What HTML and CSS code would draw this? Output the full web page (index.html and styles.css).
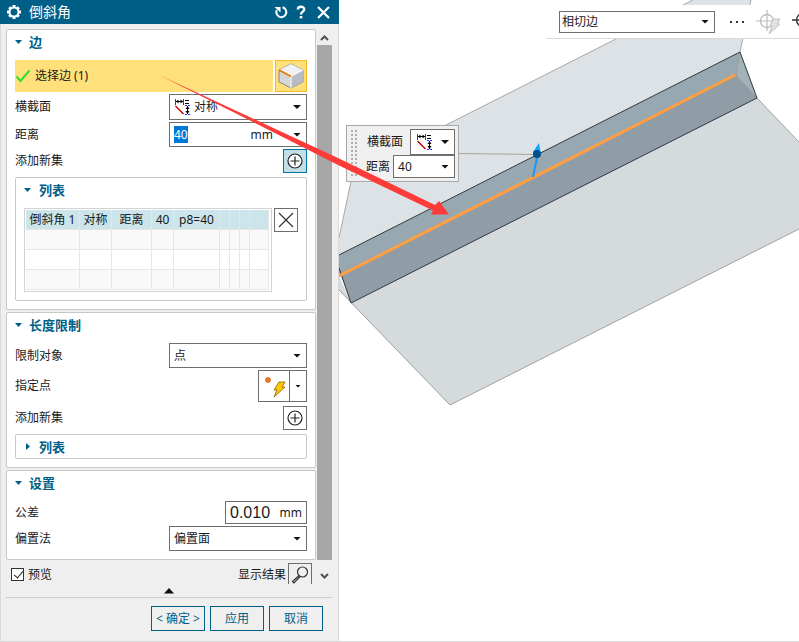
FILE: index.html
```html
<!DOCTYPE html>
<html lang="zh-CN">
<head>
<meta charset="utf-8">
<title>倒斜角</title>
<link rel="stylesheet" href="styles.css">
</head>
<body>
<svg class="defs" aria-hidden="true">
  <symbol id="i-sym" viewBox="0 0 18 18">
    <path d="M1.500 1v6M9.500 1v6M11 7.500h2M14 7.500h2M11 16.500h2M14 16.500h2" stroke="#2a2aff" fill="none"/>
    <path d="M2 3.500h7M13.500 8v8M11 2.500h4M11 5.500h4" stroke="#000" fill="none"/>
    <path d="M2 3.500l2.500-2v4zM9 3.500l-2.500-2v4zM13.500 8l2 3h-4zM13.500 16l2-3h-4z" fill="#000"/>
    <path d="M1.500 8l8 8" stroke="#c00000" stroke-width="1.400"/>
  </symbol>
  <symbol id="i-plus" viewBox="0 0 18 18">
    <circle cx="9" cy="9" r="7" fill="#fff" stroke="#222" stroke-width="1.200"/>
    <path d="M9 4.500v9M4.500 9h9" stroke="#222" stroke-width="1.200"/>
  </symbol>
</svg>
<div class="app">
  <aside class="panel">
    <header class="title">
      <svg width="16" height="16" viewBox="0 0 16 16">
        <path d="M8 1v14M1 8h14M3.200 3.200l9.600 9.600M12.800 3.200l-9.600 9.600" stroke="#fff" stroke-width="3"/>
        <circle cx="8" cy="8" r="4.500" fill="#005f87" stroke="#fff" stroke-width="2"/>
      </svg>
      <h1>倒斜角</h1>
      <button class="tb" aria-label="重置"><svg width="14" height="14" viewBox="0 0 14 14"><path d="M8.500 2.300A5 5 0 1 1 2.800 5" fill="none" stroke="#fff" stroke-width="2"/><path d="M0.500 2h6v5.500z" fill="#fff"/></svg></button>
      <button class="tb" aria-label="帮助"><svg width="14" height="14" viewBox="0 0 14 14"><path d="M3.800 4.500C3.800 0.800 10.300 0.900 10.300 4.300C10.300 6.600 7 6.600 7 9.400" fill="none" stroke="#fff" stroke-width="2.300"/><path d="M5.700 11h2.600v2.400H5.700z" fill="#fff"/></svg></button>
      <button class="tb" aria-label="关闭"><svg width="14" height="14" viewBox="0 0 14 14"><path d="M2 2l11 11M13 2L2 13" stroke="#fff" stroke-width="2.200"/></svg></button>
    </header>
    <div class="frame">
      <div class="scroll">
        <div class="cards">
          <section class="card">
            <h2 class="head">边</h2>
            <div class="pick">
              <div class="pick-label"><svg width="16" height="16" viewBox="0 0 16 16"><path d="M1.500 8.500l4 4.500L14.500 2.500" fill="none" stroke="#2fdc2f" stroke-width="2"/></svg>选择边 (1)</div>
              <button class="pick-btn" aria-label="选择边"><svg width="26" height="26" viewBox="0 0 26 26">
                <path d="M13 1l12 6v12l-12 6-12-6V7z" fill="#d4d6d8" stroke="#888" />
                <path d="M13 1l12 6-12 6.500L1 7z" fill="#f0f1f2"/>
                <path d="M13 13.500L25 7v12l-12 6z" fill="#b9bcc0"/>
                <path d="M13 13.500V25M13 13.500L25 7" stroke="#fff"/>
                <path d="M1 7l12 6.500" stroke="#f07800" stroke-width="1.800"/></svg></button>
            </div>
            <div class="row r26"><label for="sec">横截面</label>
              <span class="sel wide icon"><svg width="18" height="18"><use href="#i-sym"/></svg><select id="sec"><option>对称</option></select></span></div>
            <div class="row r25"><label for="dist">距离</label>
              <span class="sel wide field"><input id="dist" class="marked" value="40"><span class="unit">mm</span></span></div>
            <div class="row r24"><span>添加新集</span><button class="sq active" aria-label="添加新集"><svg width="18" height="18"><use href="#i-plus"/></svg></button></div>
            <div class="sub">
              <h3 class="head">列表</h3>
              <div class="list">
                <div class="table-box">
                  <table>
                    <colgroup><col class="c54"><col class="c32"><col class="c40"><col class="c22"><col class="c46"><col class="c10"><col class="c10"><col class="c10"><col></colgroup>
                    <tbody>
                      <tr class="on"><td>倒斜角 1</td><td>对称</td><td>距离</td><td>40</td><td>p8=40</td><td></td><td></td><td></td><td></td></tr>
                      <tr><td></td><td></td><td></td><td></td><td></td><td></td><td></td><td></td><td></td></tr>
                      <tr><td></td><td></td><td></td><td></td><td></td><td></td><td></td><td></td><td></td></tr>
                      <tr><td></td><td></td><td></td><td></td><td></td><td></td><td></td><td></td><td></td></tr>
                    </tbody>
                  </table>
                </div>
                <button class="sq" aria-label="移除"><svg width="18" height="18" viewBox="0 0 18 18"><path d="M2 2l14 14M16 2L2 16" stroke="#333" stroke-width="1.200"/></svg></button>
              </div>
            </div>
          </section>

          <section class="card">
            <h2 class="head">长度限制</h2>
            <div class="row r25"><label for="lim">限制对象</label><span class="sel wide"><select id="lim"><option>点</option></select></span></div>
            <div class="row r32"><span>指定点</span>
              <span class="split"><button class="point" aria-label="指定点"><svg width="28" height="28" viewBox="0 0 28 28"><circle cx="8" cy="8" r="2.500" fill="#f07820" stroke="#b85000" stroke-width=".6"/><path d="M19 10h6l-3 5h3L14 25l3-7h-3z" fill="#ffc800" stroke="#806000" stroke-width=".8"/></svg></button><button class="drop" aria-label="点类型"></button></span></div>
            <div class="row r24 spaced"><span>添加新集</span><button class="sq" aria-label="添加新集"><svg width="18" height="18"><use href="#i-plus"/></svg></button></div>
            <div class="sub closed"><h3 class="head">列表</h3></div>
          </section>

          <section class="card">
            <h2 class="head">设置</h2>
            <div class="row r23"><label for="tol">公差</label><span class="tol"><input id="tol" value="0.010"><span>mm</span></span></div>
            <div class="row r25"><label for="off">偏置法</label><span class="sel wide"><select id="off"><option>偏置面</option></select></span></div>
          </section>

          <div class="preview">
            <input type="checkbox" id="pv" checked><label for="pv">预览</label>
            <span class="result">显示结果</span>
            <button class="sq" aria-label="显示结果"><svg width="20" height="20" viewBox="0 0 20 20"><circle cx="12.500" cy="7" r="5" fill="none" stroke="#333" stroke-width="1.200"/><path d="M9 10.500l-6.500 6 1.500 1.500 6-6.500" fill="none" stroke="#333" stroke-width="1.200"/></svg></button>
          </div>
        </div>
        <div class="bar">
          <svg width="15" height="16" viewBox="0 0 15 16"><path d="M4 11l3.500-3.500L11 11" fill="none" stroke="#505050" stroke-width="2"/></svg>
          <div class="thumb"></div>
          <svg width="15" height="24" viewBox="0 0 15 24"><path d="M4 14l3.500 3.500L11 14" fill="none" stroke="#505050" stroke-width="2"/></svg>
        </div>
      </div>
      <div class="fold"><svg width="10" height="6" viewBox="0 0 10 6"><path d="M5 0l5 5.500H0z" fill="#111"/></svg></div>
      <footer class="actions">
        <button>&lt; 确定 &gt;</button><button>应用</button><button>取消</button>
      </footer>
    </div>
  </aside>

  <main class="view">
    <svg class="model" viewBox="339 0 460 641" preserveAspectRatio="xMinYMin slice">
      <path d="M339 238L353 172 446 125 693 0H751L740 52 339 255z" fill="#dde2e6"/>
      <path d="M339 238L353 172 446 125 693 0M751 0L740 52" fill="none" stroke="#a8a8a8"/>
      <path d="M339 276L351 303 339 290zM351 303L757 98 799 142V229L450 405z" fill="#d5dadd"/>
      <path d="M339 290L450 405 799 229M757 98L799 142" fill="none" stroke="#a0a2a3"/>
      <path d="M339 255L740 52 736 75 339 276z" fill="#98a8b0"/>
      <path d="M341 275L736 75 757 98 351 303z" fill="#909da6"/>
      <path d="M740 52L757 98 736 75z" fill="#a3b2b9"/>
      <path d="M740 52L736 75 757 98" fill="none" stroke="#9a9a9a"/>
      <path d="M339 255L740 52 757 98 351 303" fill="none" stroke="#30383c"/>
      <path d="M339 268L351 303" stroke="#30383c"/>
      <path d="M339 276L735 75" stroke="#ff9e42" stroke-width="3"/>
      <path d="M459 153.500L537 154.500" stroke="#aaa597"/>
      <path d="M538 153L533 177" stroke="#1696ff" stroke-width="2"/>
      <path d="M539 143L533 152 541 155z" fill="#0aa5ff"/>
      <circle cx="537" cy="154" r="4" fill="#00508c"/>
    </svg>
    <div class="toolbar">
      <span class="sel"><select aria-label="曲线规则"><option>相切边</option></select></span>
      <svg class="dots" width="14" height="4" viewBox="0 0 14 4"><path d="M0 1h2v2H0zM6 1h2v2H6zM12 1h2v2h-2z" fill="#333"/></svg>
      <svg width="26" height="26" viewBox="0 0 26 26"><circle cx="11" cy="12" r="6.500" fill="none" stroke="#bbb" stroke-width="1.300"/><path d="M11 1v21M0 12h21" stroke="#bbb" stroke-width="1.200"/><path d="M17 10h7l-3 5h3L13 25l3-8h-2z" fill="#e2e2e2" stroke="#c0c0c0"/></svg>
      <svg class="cut" width="22" height="22" viewBox="0 0 22 22"><circle cx="11" cy="9" r="6.500" fill="none" stroke="#333" stroke-width="1.400"/><path d="M11 0v20M0 9h22" stroke="#333" stroke-width="1.400"/></svg>
    </div>
    <div class="popup">
      <div class="grip"></div>
      <div class="popup-rows">
        <div class="prow"><span>横截面</span><button class="sel mini" aria-label="横截面"><svg width="18" height="18"><use href="#i-sym"/></svg></button></div>
        <div class="prow"><label for="pd">距离</label><span class="sel num"><input id="pd" value="40"></span></div>
      </div>
    </div>
  </main>
  <svg class="pointer" width="460" height="220" viewBox="0 0 460 220"><path d="M159 75L339 158.500 435 205 439 201 449 214.500H431L433 210.500 339 165.500 235 113z" fill="#fd3b38"/></svg>
</div>
</body>
</html>
```
FILE: styles.css
```css
* { box-sizing: border-box; }
body {
  margin: 0;
  color: #1a1a1a;
  background: #fff;
  font: 12px/16px "Noto Sans", "Noto Sans CJK SC", sans-serif;
}
button, input, select { margin: 0; padding: 0; border: 0; border-radius: 0; font: inherit; color: inherit; background: none; outline: 0; }
svg { display: block; flex: none; }
h1, h2, h3 { margin: 0; }
.defs { position: absolute; width: 0; height: 0; }
.app { position: relative; display: flex; min-height: 100vh; border-bottom: 1px solid #d9d9d9; overflow: hidden; }

/* dialog */
.panel { flex: none; width: 339px; display: flex; flex-direction: column; background: #efefef; }
.title { display: flex; align-items: center; height: 24px; padding: 0 9px 0 6px; color: #fff; background: #005f87; }
.title h1 { flex: 1; margin-left: 7px; font-size: 14px; font-weight: 400; line-height: 24px; }
.tb { width: 14px; height: 14px; }
.tb + .tb { margin-left: 6px; }
.tb:last-child { margin-left: 8px; }
.frame { flex: 1; padding: 5px 6px 0 5px; border: solid #d9d9d9; border-width: 0 1px; }
.scroll { display: flex; gap: 1px; }
.cards { flex: 1; display: flex; flex-direction: column; gap: 2px; min-width: 0; }
.card { display: flex; flex-direction: column; gap: 2px; padding: 0 8px 8px; border: 1px solid #c8c8c8; border-radius: 2px; background: #fff; }
.head { display: flex; align-items: center; gap: 7px; height: 24px; font-size: 13px; font-weight: 700; color: #005f87; }
.head::before { content: ""; width: 7px; height: 4px; background: #005f87; clip-path: polygon(0 0, 100% 0, 50% 100%); }
.card > .head { margin-bottom: 4px; }
.sub .head { gap: 8px; }
.pick { display: flex; gap: 2px; height: 32px; }
.pick-label { flex: 1; display: flex; align-items: center; gap: 4px; background: #ffe07a; }
.pick-btn { display: grid; place-items: center; width: 32px; background: #ffe07a; border: 1px solid #f5b820; }
.row { display: flex; align-items: center; justify-content: space-between; }
.r23 { height: 23px; }
.r24 { height: 24px; }
.r25 { height: 25px; }
.r26 { height: 26px; }
.r32 { height: 32px; }
.spaced { margin-top: 2px; }

.sel { position: relative; display: flex; align-items: center; height: 100%; padding: 0 4px; border: 1px solid #6e6e6e; background: #fff; }
.sel::after, .drop::after { content: ""; width: 8px; height: 4px; background: #111; clip-path: polygon(0 0, 100% 0, 50% 100%); }
.sel::after { position: absolute; right: 5px; top: 50%; margin-top: -2px; pointer-events: none; }
.sel select { appearance: none; width: 100%; height: 100%; }
.wide { width: 138px; }
.icon { gap: 2px; }
.field { justify-content: space-between; padding-right: 33px; }
.marked { width: 14px; height: 17px; color: #fff; background: #0078d7; }
.sq { display: grid; place-items: center; flex: none; width: 24px; height: 24px; border: 1px solid #6e6e6e; background: #fff; }
.sq.active { border-color: #00749e; background: #c2dfe6; }
.sub { margin-top: 2px; padding: 0 8px 8px; border: 1px solid #c8c8c8; border-radius: 2px; }
.sub .head { margin-bottom: 6px; }
.sub.closed { padding-bottom: 0; }
.closed .head { height: 23px; margin: 0; }
.closed .head::before { width: 4px; height: 7px; margin: 0 1px 0 2px; clip-path: polygon(0 0, 100% 50%, 0 100%); }
.list { display: flex; align-items: flex-start; gap: 2px; }
.table-box { flex: 1; padding: 1px; border: 1px solid #d2d2d2; }
table { width: 243px; table-layout: fixed; border-collapse: separate; border-spacing: 0; }
td { height: 20px; padding: 0; border: solid #e6e6e6; border-width: 0 1px 1px 0; text-align: center; white-space: nowrap; line-height: 19px; }
tr:nth-child(even) td { background: #f9f9f9; }
tr:last-child td { background: #f9f9f9; }
.on td { background: #cbe5ea; }
.c54 { width: 54px; }
.c32 { width: 32px; }
.c40 { width: 40px; }
.c22 { width: 22px; }
.c46 { width: 46px; }
.c10 { width: 10px; }

.split { display: flex; height: 100%; border: 1px solid #6e6e6e; }
.point { display: grid; place-items: center; width: 31px; border-right: 1px solid #6e6e6e; }
.drop { display: grid; place-items: center; width: 16px; }
.drop::after { width: 6px; height: 3px; }
.tol { display: flex; align-items: center; justify-content: space-between; width: 82px; height: 100%; padding: 0 4px; border: 1px solid #6e6e6e; }
.tol input { width: 48px; font: 16px "Liberation Sans", sans-serif; }
.preview { display: flex; align-items: flex-start; height: 22px; padding: 1px 4px 0 5px; line-height: 24px; overflow: hidden; }
.preview input { appearance: none; width: 13px; height: 13px; margin: 5px 4px 0 0; border: 1px solid #333; background: #fff; }
.preview input:checked::after { content: ""; display: block; width: 4px; height: 8px; margin: 0 0 0 4px; border: solid #222; border-width: 0 1px 1px 0; transform: rotate(40deg); }
.result { margin-left: auto; padding-right: 2px; }
.preview .sq { background: #efefef; }
.bar { display: flex; flex-direction: column; width: 15px; }
.thumb { flex: 1; background: #a6a6a6; }
.fold { display: flex; justify-content: center; height: 14px; padding-top: 4px; border-bottom: 1px solid #cfcfcf; }
.actions { display: flex; justify-content: flex-end; gap: 5px; padding: 8px 9px 10px 0; }
.actions button { width: 54px; height: 25px; border: 1px solid #005f87; color: #005f87; white-space: nowrap; }

/* graphics window */
.view { position: relative; flex: 1; min-width: 0; overflow: hidden; }
.model { position: absolute; inset: 0; width: 100%; height: 100%; }
.toolbar { position: absolute; top: 5px; left: 207px; right: 0; display: flex; align-items: center; height: 34px; padding-left: 13px; overflow: hidden; border-bottom: 1px solid #d9d9d9; background: #fff; }
.toolbar .sel { flex: none; width: 156px; height: 22px; padding: 0 2px; }
.dots { margin: 0 12px 0 15px; }
.cut { margin-left: 10px; }
.popup { position: absolute; top: 125px; left: 7px; display: flex; gap: 9px; padding: 3px; border: 1px solid #aaa; background: #f0f0f0; }
.grip { width: 7px; background: radial-gradient(circle, #b0b0b0 1px, transparent 1px) 0 0 / 4px 4px; }
.popup-rows { display: flex; flex-direction: column; align-items: flex-end; }
.prow { display: flex; align-items: center; gap: 3px; }
.prow span:first-child { margin-right: 4px; }
.mini { width: 45px; height: 26px; padding: 0 5px; }
.num { width: 62px; height: 23px; }
.num input { width: 36px; }
.pointer { position: absolute; top: 0; left: 0; pointer-events: none; }
```
